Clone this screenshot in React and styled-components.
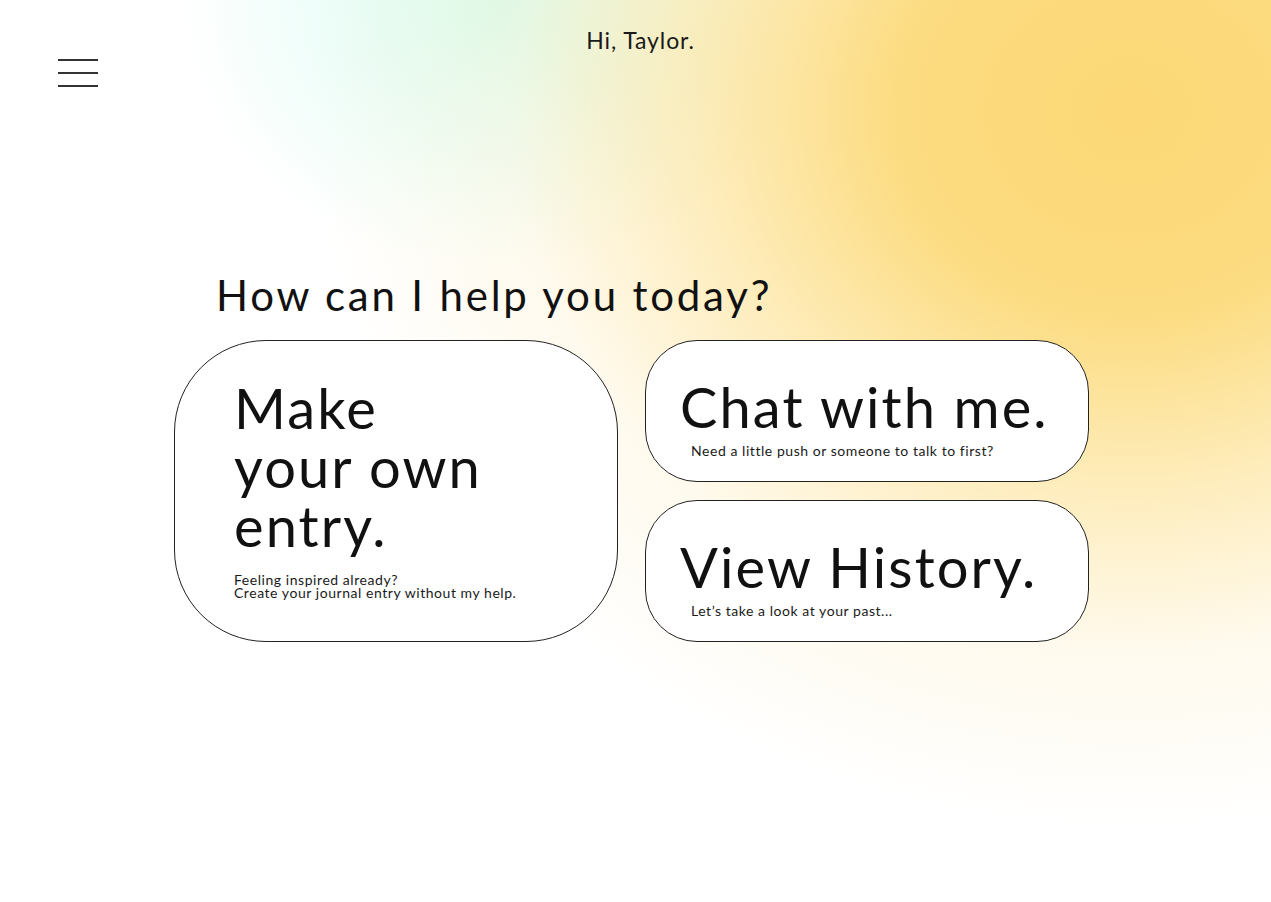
import React from "react";
import styled, { createGlobalStyle } from "styled-components";

const GlobalStyle = createGlobalStyle`
  html, body { margin: 0; padding: 0; }
  body {
    font-family: Lato, "Open Sans", sans-serif;
    color: #111;
    -webkit-font-smoothing: antialiased;
  }
  * { box-sizing: border-box; }
`;

const Page = styled.div`
  min-height: 100vh;
  width: 100%;
  overflow: hidden;
  background:
    radial-gradient(ellipse 820px 720px at 1130px 110px,
      rgba(252, 216, 118, 1) 0%,
      rgba(252, 218, 122, 0.95) 28%,
      rgba(253, 226, 150, 0.65) 52%,
      rgba(254, 238, 196, 0.3) 75%,
      rgba(255, 255, 255, 0) 100%),
    radial-gradient(ellipse 320px 270px at 500px 0px,
      rgba(214, 252, 240, 1) 0%,
      rgba(222, 252, 244, 0.6) 50%,
      rgba(255, 255, 255, 0) 100%),
    #ffffff;
`;

const Header = styled.header`
  display: grid;
  grid-template-columns: 1fr auto 1fr;
  align-items: start;
  padding: 0 48px 0 58px;
`;

const MenuButton = styled.button`
  display: flex;
  flex-direction: column;
  gap: 11px;
  width: 40px;
  margin-top: 59px;
  padding: 0;
  border: none;
  background: none;
  cursor: pointer;
`;

const MenuLine = styled.span`
  display: block;
  width: 40px;
  height: 2px;
  background: #333;
`;

const Greeting = styled.h2`
  margin: 26px 0 0;
  font-size: 23px;
  font-weight: 400;
  letter-spacing: 0.9px;
  color: #1a1a1a;
`;

const Main = styled.main`
  padding: 185px 0 0 174px;
`;

const Heading = styled.h1`
  margin: 0 0 22px 42px;
  font-size: 42px;
  font-weight: 400;
  line-height: 1.1;
  letter-spacing: 2.8px;
  color: #111;
`;

const Cards = styled.div`
  display: grid;
  grid-template-columns: 444px 444px;
  grid-template-rows: 142px 142px;
  column-gap: 27px;
  row-gap: 18px;
`;

const Card = styled.button`
  grid-row: ${(p) => (p.$tall ? "span 2" : "auto")};
  display: flex;
  flex-direction: column;
  align-items: flex-start;
  text-align: left;
  background: #fff;
  border: 1px solid #222;
  border-radius: ${(p) => (p.$tall ? "92px" : "52px")};
  padding: ${(p) => (p.$tall ? "37px 20px 0 59px" : "36px 10px 0 34px")};
  font-family: inherit;
  color: #111;
  cursor: pointer;
`;

const CardTitle = styled.span`
  display: block;
  font-size: 56px;
  font-weight: 400;
  line-height: 59px;
  letter-spacing: 2.1px;
  white-space: nowrap;
`;

const CardText = styled.span`
  display: block;
  margin: ${(p) => (p.$tall ? "18px 0 0" : "8px 0 0 11px")};
  font-size: 14px;
  line-height: 13px;
  letter-spacing: 0.55px;
  color: #1a1a1a;
  white-space: nowrap;
`;

export default function App() {
  return (
    <>
      <GlobalStyle />
      <Page>
        <Header>
          <MenuButton aria-label="Menu">
            <MenuLine />
            <MenuLine />
            <MenuLine />
          </MenuButton>
          <Greeting>Hi, Taylor.</Greeting>
          <div />
        </Header>
        <Main>
          <Heading>How can I help you today?</Heading>
          <Cards>
            <Card $tall>
              <CardTitle>
                Make
                <br />
                your own
                <br />
                entry.
              </CardTitle>
              <CardText $tall>
                Feeling inspired already?
                <br />
                Create your journal entry without my help.
              </CardText>
            </Card>
            <Card>
              <CardTitle>Chat with me.</CardTitle>
              <CardText>Need a little push or someone to talk to first?</CardText>
            </Card>
            <Card>
              <CardTitle>View History.</CardTitle>
              <CardText>Let’s take a look at your past...</CardText>
            </Card>
          </Cards>
        </Main>
      </Page>
    </>
  );
}
